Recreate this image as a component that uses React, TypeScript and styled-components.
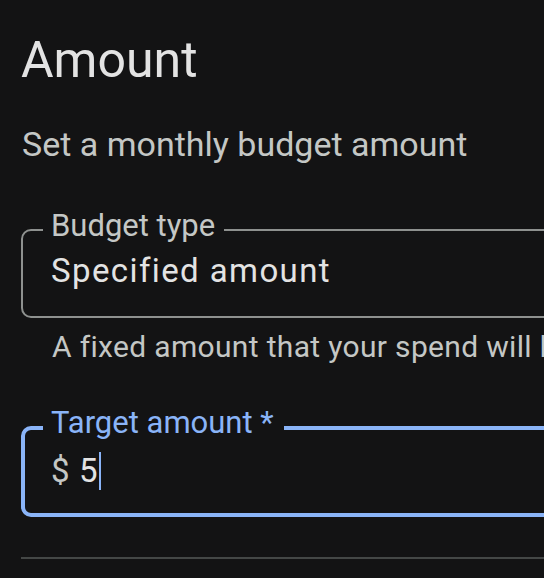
import React from 'react';
import styled, {createGlobalStyle} from 'styled-components';

const GlobalStyle = createGlobalStyle`
  html, body {
    margin: 0;
    padding: 0;
    background: #131314;
  }
  body {
    font-family: Roboto, "Noto Sans", sans-serif;
    overflow: hidden;
  }
`

const Page = styled.div`
  width: 544px;
  height: 578px;
  padding: 28px 0 0 21px;
  box-sizing: border-box;
  overflow: hidden;
  display: flex;
  flex-direction: column;
`

const Title = styled.h1`
  margin: 0;
  color: #e3e3e3;
  font-size: 50px;
  font-weight: 400;
  line-height: 64px;
`

const Subtitle = styled.p`
  margin: 32px 0 0 1px;
  color: #c4c7c5;
  font-size: 34px;
  line-height: 40px;
  white-space: nowrap;
`

const Field = styled.fieldset<{ $focused?: boolean }>`
  margin: ${p => p.$focused ? '42px' : '46px'} -40px 0 0;
  min-width: 0;
  padding: 0 0 ${p => p.$focused ? '22px' : '25px'} ${p => p.$focused ? '26px' : '28px'};
  border: ${p => p.$focused ? '4px solid #8ab4f8' : '2px solid #8e918f'};
  border-radius: 10px;
`

const Legend = styled.legend<{ $focused?: boolean }>`
  margin-left: -8px;
  padding: 0 ${p => p.$focused ? '10px' : '9px'} ${p => p.$focused ? '10px' : '7px'} 8px;
  font-size: 31px;
  line-height: 32px;
  color: ${p => p.$focused ? '#8ab4f8' : '#c4c7c5'};
  white-space: nowrap;
`

const Value = styled.div`
  margin-top: 2px;
  color: #e3e3e3;
  font-size: 33px;
  line-height: 40px;
  letter-spacing: 1.4px;
  white-space: nowrap;
  display: flex;
  align-items: center;
`

const Prefix = styled.span`
  color: #c4c7c5;
  margin-right: 8px;
`

const Caret = styled.span`
  display: inline-block;
  width: 2px;
  height: 38px;
  background: #8ab4f8;
`

const Helper = styled.p`
  margin: 11px 0 0 31px;
  color: #c4c7c5;
  font-size: 30px;
  line-height: 36px;
  letter-spacing: 0.33px;
  white-space: nowrap;
`

const Divider = styled.hr`
  margin: 40px 0 0 0;
  flex-shrink: 0;
  border: none;
  height: 2px;
  background: #444746;
`

export default function App() {
    return (
        <>
            <GlobalStyle/>
            <Page>
                <Title>Amount</Title>
                <Subtitle>Set a monthly budget amount</Subtitle>
                <Field>
                    <Legend>Budget type</Legend>
                    <Value>Specified amount</Value>
                </Field>
                <Helper>A fixed amount that your spend will be measured against</Helper>
                <Field $focused>
                    <Legend $focused>Target amount *</Legend>
                    <Value>
                        <Prefix>$</Prefix>5<Caret/>
                    </Value>
                </Field>
                <Divider/>
            </Page>
        </>
    );
}
